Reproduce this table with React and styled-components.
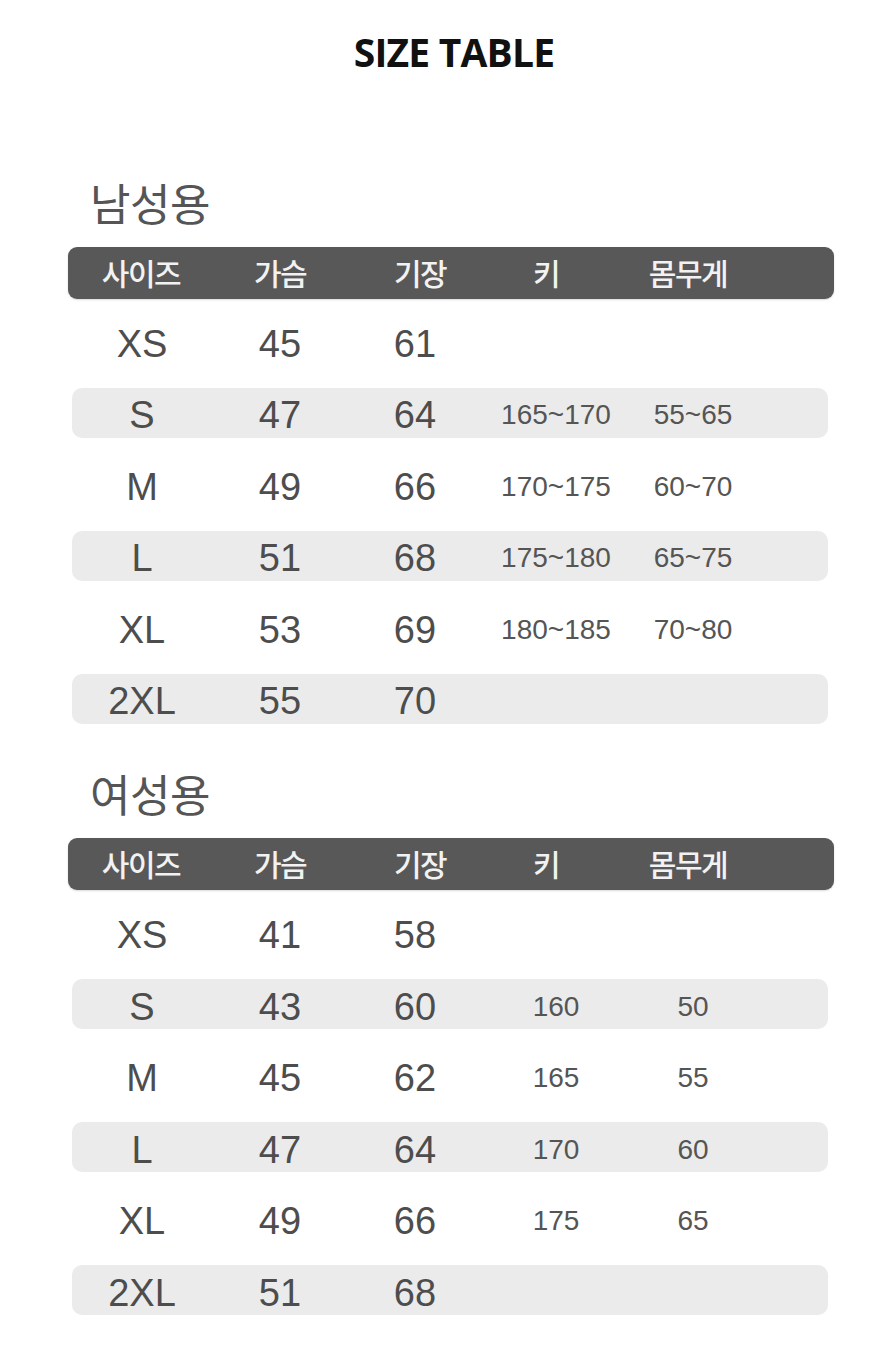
import React from "react";
import styled, { createGlobalStyle } from "styled-components";

const Global = createGlobalStyle`
  html, body { margin: 0; padding: 0; background: #ffffff; }
  body { font-family: "Liberation Sans", Arial, "Noto Sans CJK KR", sans-serif; }
`;

const Page = styled.div`
  width: 887px;
  height: 1370px;
  box-sizing: border-box;
  padding: 26px 53px 0 68px;
  display: flex;
  flex-direction: column;
  background: #fff;
  overflow: hidden;
`;

const Title = styled.h1`
  margin: 0;
  padding-left: 6px;
  text-align: center;
  font-family: "Open Sans", "Noto Sans", sans-serif;
  font-weight: 700;
  font-size: 39px;
  line-height: 52px;
  letter-spacing: -0.8px;
  color: #111;
`;

const Section = styled.section`
  display: flex;
  flex-direction: column;
  margin-top: ${(p) => p.$top}px;
`;

const Heading = styled.h2`
  margin: 0 0 0 22px;
  font-family: "Noto Sans CJK KR", sans-serif;
  font-weight: 400;
  font-size: 44px;
  line-height: 60px;
  color: #555;
  letter-spacing: -0.5px;
`;

const HeaderBar = styled.div`
  margin-top: 15px;
  height: 52px;
  width: 766px;
  border-radius: 9px;
  background: #585858;
  display: grid;
  grid-template-columns: 146px 132px 148px 104px 180px 1fr;
  align-items: center;
  box-shadow: 0 1px 2px rgba(0, 0, 0, 0.15);
`;

const HeadCell = styled.div`
  text-align: center;
  font-family: "Noto Sans CJK KR", sans-serif;
  font-weight: 500;
  font-size: 30px;
  line-height: 1;
  color: #f2f2f2;
  letter-spacing: -1.5px;
  padding-bottom: 2px;
`;

const Rows = styled.div`
  margin: ${(p) => p.$gap}px 0 0 4px;
  width: 756px;
  display: flex;
  flex-direction: column;
  gap: 21.5px;
`;

const Row = styled.div`
  height: 50px;
  border-radius: 10px;
  background: ${(p) => (p.$shaded ? "#ebebeb" : "transparent")};
  display: grid;
  grid-template-columns: 140px 136px 134px 148px 126px 1fr;
  align-items: center;
`;

const Cell = styled.div`
  text-align: center;
  font-family: "Liberation Sans", Arial, sans-serif;
  font-size: ${(p) => (p.$small ? 28 : 38)}px;
  line-height: 1;
  color: ${(p) => (p.$small ? "#555" : "#4d4d4d")};
  padding-top: 5px;
`;

const headers = ["사이즈", "가슴", "기장", "키", "몸무게"];

const men = [
  ["XS", "45", "61", "", ""],
  ["S", "47", "64", "165~170", "55~65"],
  ["M", "49", "66", "170~175", "60~70"],
  ["L", "51", "68", "175~180", "65~75"],
  ["XL", "53", "69", "180~185", "70~80"],
  ["2XL", "55", "70", "", ""],
];

const women = [
  ["XS", "41", "58", "", ""],
  ["S", "43", "60", "160", "50"],
  ["M", "45", "62", "165", "55"],
  ["L", "47", "64", "170", "60"],
  ["XL", "49", "66", "175", "65"],
  ["2XL", "51", "68", "", ""],
];

function SizeSection({ title, rows, top, gap }) {
  return (
    <Section $top={top}>
      <Heading>{title}</Heading>
      <HeaderBar>
        {headers.map((h) => (
          <HeadCell key={h}>{h}</HeadCell>
        ))}
        <span />
      </HeaderBar>
      <Rows $gap={gap}>
        {rows.map((r, i) => (
          <Row key={r[0]} $shaded={i % 2 === 1}>
            {r.map((v, j) => (
              <Cell key={j} $small={j >= 3}>
                {v}
              </Cell>
            ))}
            <span />
          </Row>
        ))}
      </Rows>
    </Section>
  );
}

export default function App() {
  return (
    <>
      <Global />
      <Page>
        <Title>SIZE TABLE</Title>
        <SizeSection title="남성용" rows={men} top={94} gap={17} />
        <SizeSection title="여성용" rows={women} top={39} gap={18} />
      </Page>
    </>
  );
}
